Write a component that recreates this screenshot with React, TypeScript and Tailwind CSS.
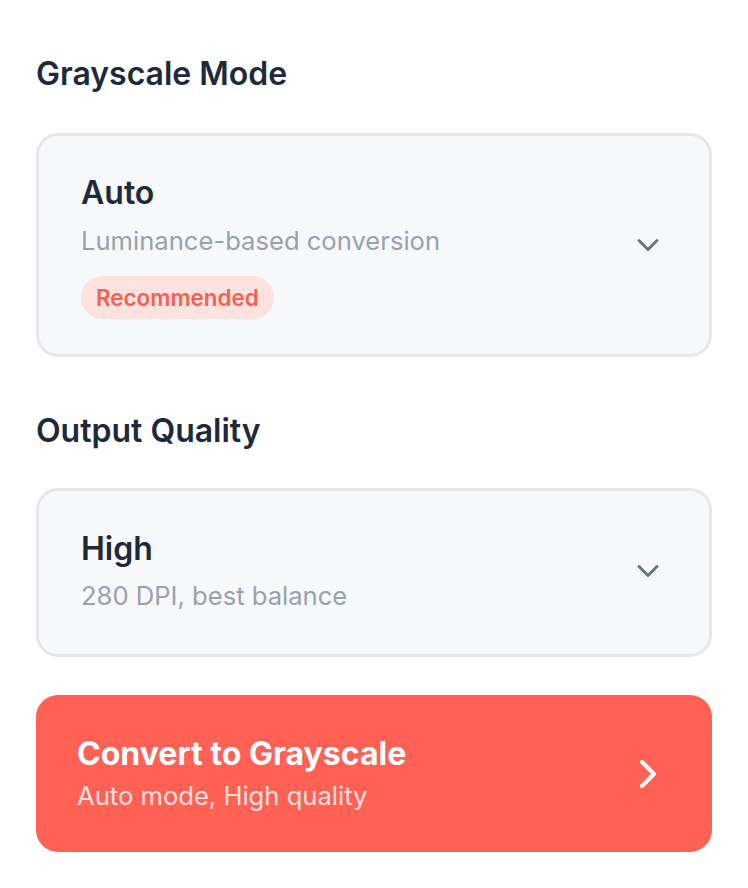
import { ChevronDown, ChevronRight } from 'lucide-react';

export default function App() {
  return (
    <div className="min-h-screen bg-white px-9 pt-[52px] pb-9 font-['Inter',sans-serif]">
      <h2 className="text-[32px] leading-[44.8px] font-semibold text-gray-800">Grayscale Mode</h2>

      <button className="mt-[36px] w-full flex items-center justify-between rounded-[22px] border-[3px] border-gray-200 bg-[#f7f8fa] pl-[42px] pr-[43px] pt-[35px] pb-[35px] text-left">
        <div>
          <p className="text-[32px] leading-[44.8px] font-semibold text-gray-800">Auto</p>
          <p className="mt-[6px] text-[25.6px] leading-[38.4px] text-gray-400">Luminance-based conversion</p>
          <span className="mt-[16px] inline-flex h-[43px] items-center rounded-full bg-[#fee2df] px-[15px] text-[22.4px] font-semibold text-[#f9604f]">
            Recommended
          </span>
        </div>
        <ChevronDown className="h-9 w-9 text-gray-500" strokeWidth={2} />
      </button>

      <h2 className="mt-[52px] text-[32px] leading-[44.8px] font-semibold text-gray-800">Output Quality</h2>

      <button className="mt-[34px] w-full flex items-center justify-between rounded-[22px] border-[3px] border-gray-200 bg-[#f7f8fa] pl-[42px] pr-[43px] pt-[36px] pb-[39px] text-left">
        <div>
          <p className="text-[32px] leading-[44.8px] font-semibold text-gray-800">High</p>
          <p className="mt-[5px] text-[25.6px] leading-[38.4px] text-gray-400">280 DPI, best balance</p>
        </div>
        <ChevronDown className="h-9 w-9 text-gray-500" strokeWidth={2} />
      </button>

      <button className="mt-[38px] w-full flex items-center justify-between rounded-[22px] bg-[#ff6155] pl-[41px] pr-[40px] pt-[37px] pb-[37px] text-left">
        <div>
          <p className="text-[32px] leading-[44.8px] font-bold text-white">Convert to Grayscale</p>
          <p className="text-[25.6px] leading-[38.4px] text-white/80">Auto mode, High quality</p>
        </div>
        <ChevronRight className="h-12 w-12 text-white" strokeWidth={2} />
      </button>
    </div>
  );
}
